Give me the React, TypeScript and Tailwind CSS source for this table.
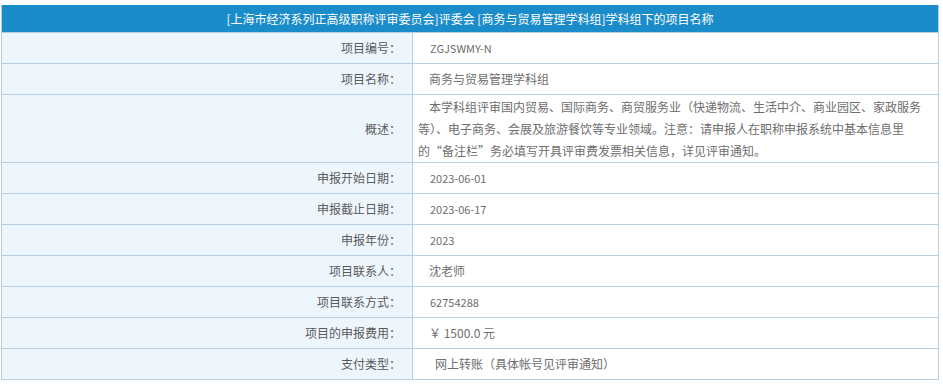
const rows: { label: string; value: string; mono?: boolean }[] = [
  { label: '项目编号：', value: 'ZGJSWMY-N', mono: true },
  { label: '项目名称：', value: '商务与贸易管理学科组' },
]

const rowsAfter: { label: string; value: string; mono?: boolean; indent?: boolean }[] = [
  { label: '申报开始日期：', value: '2023-06-01', mono: true },
  { label: '申报截止日期：', value: '2023-06-17', mono: true },
  { label: '申报年份：', value: '2023', mono: true },
  { label: '项目联系人：', value: '沈老师' },
  { label: '项目联系方式：', value: '62754288', mono: true },
  { label: '项目的申报费用：', value: '￥ 1500.0 元' },
  { label: '支付类型：', value: '网上转账（具体帐号见评审通知）', indent: true },
]

function Row({ label, value, mono, indent }: { label: string; value: string; mono?: boolean; indent?: boolean }) {
  return (
    <div className="flex h-[31px] border-b border-[#b7cfe0]">
      <div className="w-[411px] shrink-0 border-r border-[#b7cfe0] bg-[#eef6fd] flex items-center justify-end pr-[11px] text-[12px] text-[#5a5a5a]">
        {label}
      </div>
      <div
        className={
          'flex-1 flex items-center text-[#6e6e6e] ' +
          (mono ? 'pl-[17px] text-[11px] ' : 'pl-[16px] text-[12px] ') +
          (indent ? 'pl-[22px]' : '')
        }
      >
        {value}
      </div>
    </div>
  )
}

export default function App() {
  return (
    <div className="bg-white w-[943px] h-[385px] pt-[5px] pl-[1px]" style={{ fontFamily: '"Noto Sans CJK SC", "Noto Sans", sans-serif' }}>
      <div className="w-[938px] border-l border-r border-[#b7cfe0]">
        <div className="h-[28px] bg-[#1b8cca] border-b border-[#b7cfe0] flex items-center justify-center text-white text-[12px]">
          [上海市经济系列正高级职称评审委员会]评委会 [商务与贸易管理学科组]学科组下的项目名称
        </div>
        {rows.map((r) => (
          <Row key={r.label} {...r} />
        ))}
        <div className="flex h-[68px] border-b border-[#b7cfe0]">
          <div className="w-[411px] shrink-0 border-r border-[#b7cfe0] bg-[#eef6fd] flex items-center justify-end pr-[11px] text-[12px] text-[#5a5a5a]">
            概述：
          </div>
          <div className="flex-1 flex items-center pl-[5px] pr-[10px] text-[12px] leading-[22px] text-[#6e6e6e]">
            <p className="indent-[11px]">
              本学科组评审国内贸易、国际商务、商贸服务业（快递物流、生活中介、商业园区、家政服务等）、电子商务、会展及旅游餐饮等专业领域。注意：请申报人在职称申报系统中基本信息里的“备注栏”务必填写开具评审费发票相关信息，详见评审通知。
            </p>
          </div>
        </div>
        {rowsAfter.map((r) => (
          <Row key={r.label} {...r} />
        ))}
      </div>
    </div>
  )
}
